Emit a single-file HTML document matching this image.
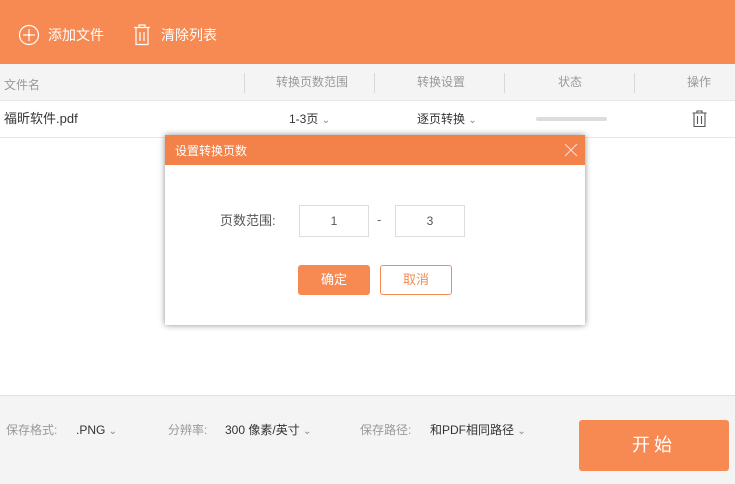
<!DOCTYPE html>
<html><head><meta charset="utf-8"><style>
*{margin:0;padding:0;box-sizing:border-box}
body{width:735px;height:484px;overflow:hidden;position:relative;background:#fff;font-family:"Liberation Sans","Noto Sans CJK SC",sans-serif;font-size:13px;color:#333}
.a{position:absolute;white-space:nowrap;line-height:16px}
.top{left:0;top:0;width:735px;height:64px;background:#f78a52}
.th{left:0;top:64px;width:735px;height:37px;background:#f4f4f4;border-bottom:1px solid #e8e8e8}
.sep{width:1px;height:20px;background:#d8d8d8;top:73px}
.hd{color:#999;font-size:12px;top:74px}
.row{left:0;top:101px;width:735px;height:37px;border-bottom:1px solid #e8e8e8}
.bot{left:0;top:395px;width:735px;height:89px;background:#f4f4f4;border-top:1px solid #e0e0e0}
.lbl{color:#999;font-size:12px;top:422px}
.val{color:#333;font-size:12px;top:422px}
.dlg{left:165px;top:135px;width:420px;height:190px;background:#fff;box-shadow:0 0 6px rgba(0,0,0,.45)}
</style></head><body>
<div class="a top"></div>
<svg class="a" style="left:18px;top:24px" width="22" height="22" viewBox="0 0 22 22"><circle cx="11" cy="11" r="9.5" fill="none" stroke="#fff" stroke-width="1.2"/><path d="M11 5v12M5 11h12" stroke="#fff" stroke-width="1.2"/></svg>
<div class="a" style="left:48px;top:27px;color:#fff;font-size:14px">添加文件</div>
<svg class="a" style="left:133px;top:24px" width="18" height="22" viewBox="0 0 18 22"><path d="M1 3.5h16M6 3.5V1h6v2.5M3 3.5v17h12v-17M7 8v9M11 8v9" fill="none" stroke="#fff" stroke-width="1.2"/></svg>
<div class="a" style="left:161px;top:27px;color:#fff;font-size:14px">清除列表</div>
<div class="a th"></div>
<div class="a hd" style="left:4px;top:77px">文件名</div>
<div class="a sep" style="left:244px"></div>
<div class="a hd" style="left:276px">转换页数范围</div>
<div class="a sep" style="left:374px"></div>
<div class="a hd" style="left:417px">转换设置</div>
<div class="a sep" style="left:504px"></div>
<div class="a hd" style="left:558px">状态</div>
<div class="a sep" style="left:634px"></div>
<div class="a hd" style="left:687px">操作</div>
<div class="a row"></div>
<div class="a" style="left:4px;top:111px">福昕软件.pdf</div>
<div class="a" style="left:289px;top:111px;font-size:12px">1-3页 <span style="color:#888;font-size:10px">&#8964;</span></div>
<div class="a" style="left:417px;top:111px;font-size:12px">逐页转换 <span style="color:#888;font-size:10px">&#8964;</span></div>
<div class="a" style="left:536px;top:117px;width:71px;height:4px;border-radius:2px;background:#ddd"></div>
<svg class="a" style="left:692px;top:110px" width="15" height="17" viewBox="0 0 15 17"><path d="M.5 3h14M5 3V1h5v2M2 3v13.5h11V3M5.5 6v8M9.5 6v8" fill="none" stroke="#555" stroke-width="1.1"/></svg>
<div class="a bot"></div>
<div class="a lbl" style="left:6px">保存格式:</div>
<div class="a val" style="left:76px">.PNG <span style="color:#888;font-size:10px">&#8964;</span></div>
<div class="a lbl" style="left:168px">分辨率:</div>
<div class="a val" style="left:225px">300 像素/英寸 <span style="color:#888;font-size:10px">&#8964;</span></div>
<div class="a lbl" style="left:360px">保存路径:</div>
<div class="a val" style="left:430px">和PDF相同路径 <span style="color:#888;font-size:10px">&#8964;</span></div>
<div class="a" style="left:579px;top:420px;width:150px;height:51px;background:#f78a52;border-radius:3px;color:#fff;font-size:18px;text-align:center;line-height:51px;letter-spacing:4px">开始</div>
<div class="a dlg">
<div class="a" style="left:0;top:0;width:420px;height:30px;background:#f2824a"></div>
<div class="a" style="left:10px;top:8px;color:#fff;font-size:12px">设置转换页数</div>
<svg class="a" style="left:399px;top:8px" width="14" height="14"><path d="M1 1l12 12M13 1L1 13" stroke="#fdd" stroke-width="1"/></svg>
<div class="a" style="left:55px;top:78px;font-size:13px;color:#555">页数范围:</div>
<div class="a" style="left:134px;top:70px;width:70px;height:32px;border:1px solid #ddd;text-align:center;line-height:30px;font-size:12px;color:#555">1</div>
<div class="a" style="left:212px;top:77px;color:#666">-</div>
<div class="a" style="left:230px;top:70px;width:70px;height:32px;border:1px solid #ddd;text-align:center;line-height:30px;font-size:12px;color:#555">3</div>
<div class="a" style="left:133px;top:130px;width:72px;height:30px;background:#f78a52;border-radius:3px;color:#fff;text-align:center;line-height:30px">确定</div>
<div class="a" style="left:215px;top:130px;width:72px;height:30px;border:1px solid #f78a52;border-radius:3px;color:#f78a52;text-align:center;line-height:28px">取消</div>
</div>
</body></html>
